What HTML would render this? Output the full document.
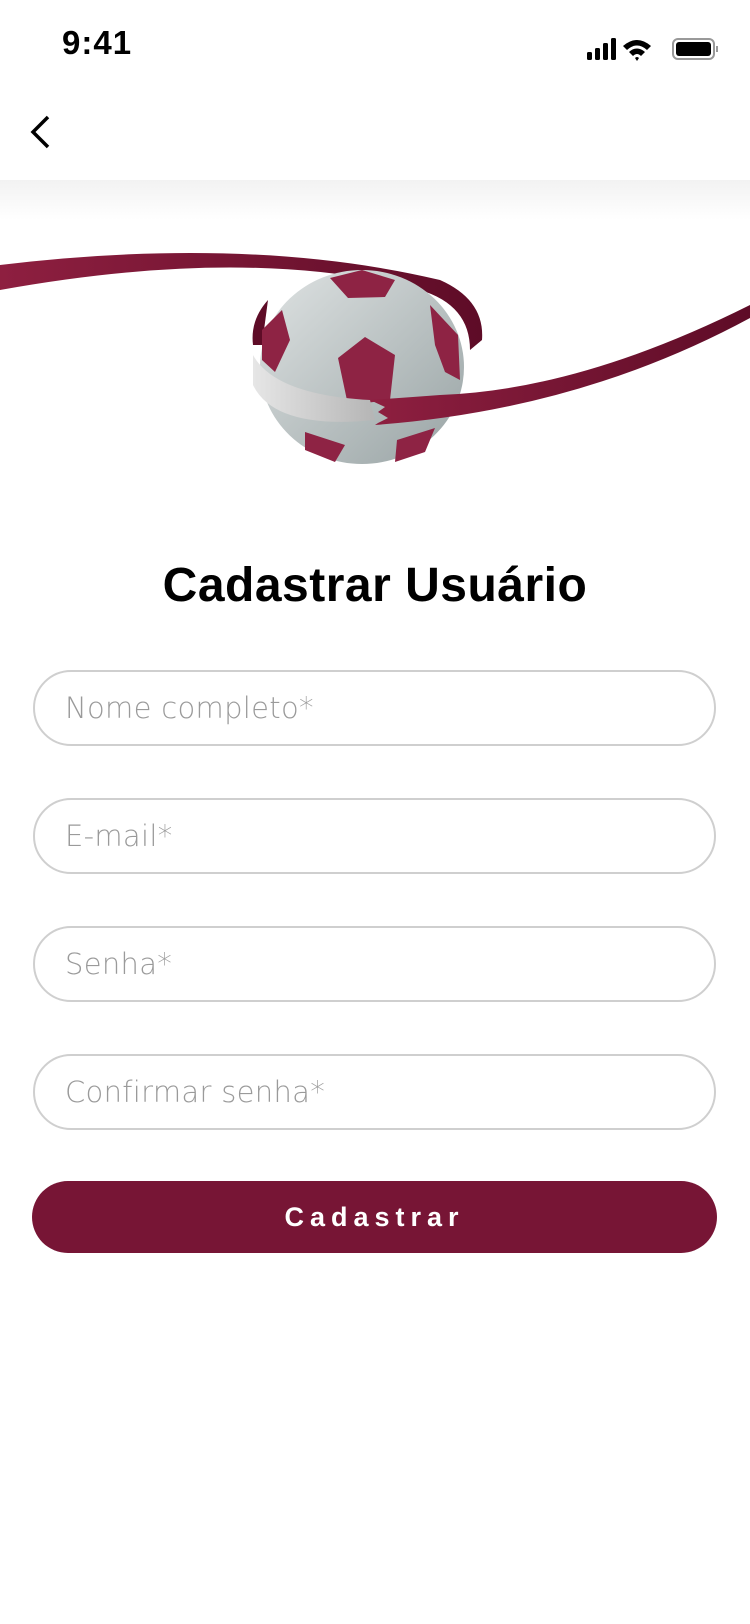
<!DOCTYPE html>
<html><head><meta charset="utf-8"><style>
body{margin:0;width:750px;height:1624px;background:#fff;font-family:"Liberation Sans",sans-serif;position:relative;overflow:hidden}
.abs{position:absolute}
.field{position:absolute;left:33px;width:683px;height:76px;border:2px solid #cfcfcf;border-radius:38px;box-sizing:border-box;font-size:29px;color:#9a9a9a;line-height:72px;padding-left:30px;font-family:"DejaVu Sans","Liberation Sans",sans-serif;font-weight:300;letter-spacing:0.3px}
</style></head><body>
<div class="abs" style="left:62px;top:24px;font-size:33px;font-weight:bold;letter-spacing:1px">9:41</div>
<svg class="abs" style="left:585px;top:36px" width="135" height="28" viewBox="0 0 135 28">
<rect x="2" y="16" width="5" height="8" rx="1.5"/><rect x="10" y="12" width="5" height="12" rx="1.5"/><rect x="18" y="7" width="5" height="17" rx="1.5"/><rect x="26" y="2" width="5" height="22" rx="1.5"/>
<path d="M38 10 Q52 -2 66 10 L62 14 Q52 5 42 14Z M44 16 Q52 9 60 16 L56 20 Q52 16 48 20Z M50 22 L52 25 L54 22 Q52 20 50 22Z"/>
<rect x="88" y="3" width="41" height="20" rx="5" fill="none" stroke="#999" stroke-width="2"/><rect x="91" y="6" width="35" height="14" rx="3"/><rect x="131" y="10" width="2" height="6" fill="#999"/>
</svg>
<svg class="abs" style="left:28px;top:115px" width="24" height="34"><path d="M20 2 L5 17 L20 32" fill="none" stroke="#000" stroke-width="3.5"/></svg>
<div class="abs" style="left:0;top:180px;width:750px;height:40px;background:linear-gradient(#f2f2f2,#fff)"></div>
<svg class="abs" style="left:0;top:230px" width="750" height="250" viewBox="0 230 750 250">
<defs><linearGradient id="r" x1="0" x2="1"><stop offset="0" stop-color="#8e1f40"/><stop offset="1" stop-color="#5e0c27"/></linearGradient>
<linearGradient id="b" x1="0" y1="0" x2="1" y2="1"><stop offset="0" stop-color="#dfe3e3"/><stop offset="1" stop-color="#98a3a4"/></linearGradient>
<linearGradient id="w" x1="0" x2="1"><stop offset="0" stop-color="#e6e6e6"/><stop offset="1" stop-color="#b5b5b5"/></linearGradient></defs>
<path d="M0 265 Q250 235 440 280 Q485 300 482 340 L470 350 Q470 305 420 290 Q250 245 0 290Z" fill="url(#r)"/>
<path d="M268 300 Q250 320 253 345 L262 345 Z" fill="#5e0c27"/>
<ellipse cx="362" cy="367" rx="102" ry="97" fill="url(#b)"/>
<path d="M330 278 L362 270 L395 280 L385 297 L348 298Z M262 330 L282 310 L290 340 L275 372 L262 360Z M430 305 L458 335 L460 380 L445 372 L435 345Z M338 358 L365 337 L395 355 L390 400 L348 405Z M305 432 L345 445 L335 462 L305 450Z M397 440 L435 428 L425 452 L395 462Z" fill="#8e2344"/>
<path d="M253 355 Q275 395 370 400 L375 420 Q275 430 253 385Z" fill="url(#w)"/>
<path d="M370 400 L385 407 L378 412 L388 418 L378 423 L375 425 Q580 410 750 318 L750 305 Q580 390 440 395 Q400 398 370 400Z" fill="url(#r)"/>
</svg>
<div class="abs" style="left:0;top:558px;width:750px;text-align:center;font-size:48px;font-weight:bold;letter-spacing:0.5px">Cadastrar Usuário</div>
<div class="field" style="top:670px">Nome completo*</div>
<div class="field" style="top:798px">E-mail*</div>
<div class="field" style="top:926px">Senha*</div>
<div class="field" style="top:1054px">Confirmar senha*</div>
<div class="abs" style="left:32px;top:1181px;width:685px;height:72px;border-radius:36px;background:#771535;color:#fff;text-align:center;line-height:72px;font-size:27px;font-weight:bold;letter-spacing:6px">Cadastrar</div>
</body></html>
